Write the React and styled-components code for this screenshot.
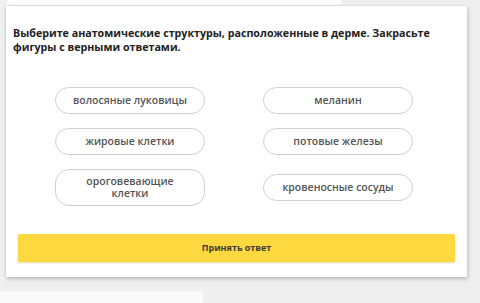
import React from 'react'
import styled, { createGlobalStyle } from 'styled-components'

const GlobalStyle = createGlobalStyle`
  html, body {
    margin: 0;
    padding: 0;
    background: #efefef;
    font-family: "Open Sans", "Noto Sans", sans-serif;
  }
`

const Page = styled.div`
  width: 480px;
  height: 303px;
  overflow: hidden;
  display: flex;
  flex-direction: column;
`

const PrevCard = styled.div`
  width: 334px;
  height: 5px;
  margin-left: 7px;
  background: #fff;
  border-bottom: 1px solid #e4e4e4;
`

const Card = styled.div`
  width: 461px;
  height: 274px;
  margin-left: 6px;
  background: #fff;
  box-shadow: 1px 2px 4px rgba(0, 0, 0, 0.22), -1px 0 2px rgba(0, 0, 0, 0.08);
  box-sizing: border-box;
  padding: 20px 12px 0 7px;
  display: flex;
  flex-direction: column;
`

const Question = styled.p`
  margin: 0;
  font-size: 10.7px;
  line-height: 14px;
  font-weight: 700;
  color: #222;
`

const Options = styled.div`
  display: grid;
  grid-template-columns: 150px 150px;
  column-gap: 58px;
  row-gap: 14px;
  align-items: center;
  margin-top: 33px;
  padding-left: 42px;
`

const Option = styled.button`
  width: 150px;
  height: ${p => (p.tall ? 37 : 27)}px;
  box-sizing: border-box;
  border: 1px solid #cfcfcf;
  border-radius: 14px;
  background: #fff;
  font-family: "Open Sans", "Noto Sans", sans-serif;
  font-size: 10.5px;
  font-weight: 600;
  line-height: 12px;
  color: #555;
  padding: 0 6px;
  cursor: pointer;
`

const Submit = styled.button`
  margin: 28px 0 0 5px;
  width: 437px;
  height: 28px;
  border: none;
  border-radius: 2px;
  background: #fdd83e;
  box-shadow: 0 1px 2px rgba(180, 150, 0, 0.35);
  font-family: "Open Sans", "Noto Sans", sans-serif;
  font-size: 9px;
  font-weight: 700;
  color: #3a3a3a;
  cursor: pointer;
`

const NextCard = styled.div`
  width: 203px;
  height: 12px;
  margin-top: 14px;
  background: #fafafa;
`

const options = [
  { text: 'волосяные луковицы' },
  { text: 'меланин' },
  { text: 'жировые клетки' },
  { text: 'потовые железы' },
  { text: 'ороговевающие клетки', tall: true },
  { text: 'кровеносные сосуды' },
]

export default function App() {
  return (
    <Page>
      <GlobalStyle />
      <PrevCard />
      <Card>
        <Question>
          Выберите анатомические структуры, расположенные в дерме. Закрасьте
          <br />
          фигуры с верными ответами.
        </Question>
        <Options>
          {options.map(o => (
            <Option key={o.text} tall={o.tall ? 1 : 0}>
              {o.tall ? (
                <>
                  ороговевающие
                  <br />
                  клетки
                </>
              ) : (
                o.text
              )}
            </Option>
          ))}
        </Options>
        <Submit>Принять ответ</Submit>
      </Card>
      <NextCard />
    </Page>
  )
}
